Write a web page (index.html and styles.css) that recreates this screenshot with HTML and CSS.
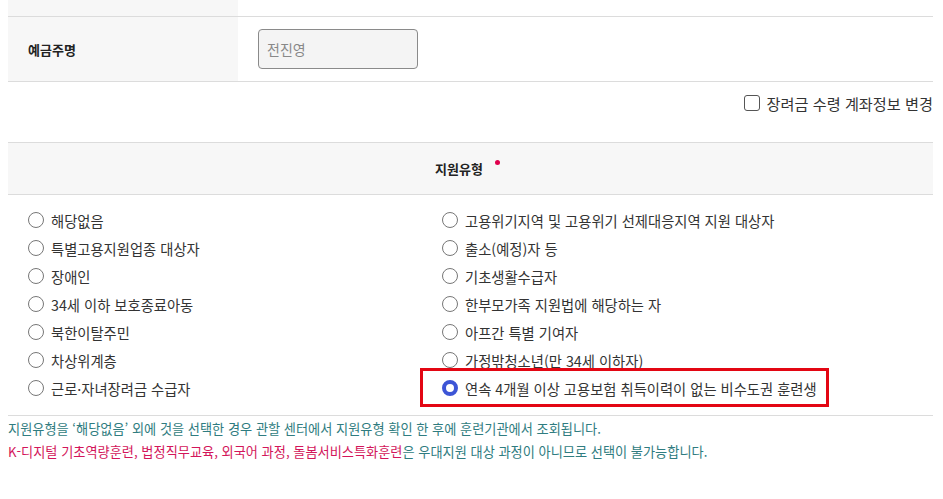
FILE: index.html
```html
<!DOCTYPE html>
<html lang="ko">
<head>
<meta charset="utf-8">
<title>지원유형</title>
<link rel="stylesheet" href="styles.css">
</head>
<body>
<div class="page">
  <div class="prev-row"><div class="th"></div><div class="td"></div></div>
  <div class="form-row">
    <div class="th">예금주명</div>
    <div class="td"><div class="input">전진영</div></div>
  </div>
  <div class="check-row">
    <label class="check"><span class="box"></span><span>장려금 수령 계좌정보 변경</span></label>
  </div>
  <div class="section-head">지원유형<span class="req"></span></div>
  <div class="radio-grid">
    <div class="col">
      <label class="radio"><span class="dot"></span>해당없음</label>
      <label class="radio"><span class="dot"></span>특별고용지원업종 대상자</label>
      <label class="radio"><span class="dot"></span>장애인</label>
      <label class="radio"><span class="dot"></span>34세 이하 보호종료아동</label>
      <label class="radio"><span class="dot"></span>북한이탈주민</label>
      <label class="radio"><span class="dot"></span>차상위계층</label>
      <label class="radio"><span class="dot"></span>근로·자녀장려금 수급자</label>
    </div>
    <div class="col">
      <label class="radio"><span class="dot"></span>고용위기지역 및 고용위기 선제대응지역 지원 대상자</label>
      <label class="radio"><span class="dot"></span>출소(예정)자 등</label>
      <label class="radio"><span class="dot"></span>기초생활수급자</label>
      <label class="radio"><span class="dot"></span>한부모가족 지원법에 해당하는 자</label>
      <label class="radio"><span class="dot"></span>아프간 특별 기여자</label>
      <label class="radio"><span class="dot"></span>가정밖청소년(만 34세 이하자)</label>
      <label class="radio selected"><span class="dot on"></span>연속 4개월 이상 고용보험 취득이력이 없는 비수도권 훈련생</label>
    </div>
  </div>
  <div class="notes">
    <p class="note">지원유형을 ‘해당없음’ 외에 것을 선택한 경우 관할 센터에서 지원유형 확인 한 후에 훈련기관에서 조회됩니다.</p>
    <p class="note"><span class="warn">K-디지털 기초역량훈련, 법정직무교육, 외국어 과정, 돌봄서비스특화훈련</span>은 우대지원 대상 과정이 아니므로 선택이 불가능합니다.</p>
  </div>
</div>
</body>
</html>
```

FILE: styles.css
```css
* { box-sizing: border-box; }
html, body { margin: 0; padding: 0; background: #fff; }
body {
  font-family: "Noto Sans CJK KR", "Noto Sans", sans-serif;
  color: #333;
}
.page {
  width: 925px;
  margin-left: 8px;
}
.prev-row {
  display: flex;
  height: 16px;
}
.prev-row .th { width: 230px; background: #f7f7f7; }
.form-row {
  display: flex;
  height: 66px;
  border-top: 1px solid #dcdcdc;
  border-bottom: 1px solid #dcdcdc;
}
.form-row .th {
  width: 230px;
  background: #f7f7f7;
  padding-left: 20px;
  display: flex;
  align-items: center;
  font-size: 13px;
  font-weight: 700;
  color: #222;
}
.form-row .td {
  padding-left: 20px;
  display: flex;
  align-items: center;
}
.input {
  width: 160px;
  height: 40px;
  border: 1px solid #8a8a8a;
  border-radius: 4px;
  background: #f4f4f4;
  padding-left: 8px;
  display: flex;
  align-items: center;
  font-size: 14px;
  color: #888;
}
.check-row {
  height: 60px;
  display: flex;
  justify-content: flex-end;
  padding-top: 12px;
}
.check {
  display: flex;
  align-items: center;
  gap: 7px;
  height: 17px;
  font-size: 15.2px;
  color: #333;
}
.box {
  width: 16px;
  height: 16px;
  border: 1px solid #555;
  border-radius: 3px;
  background: #fff;
}
.section-head {
  height: 53px;
  border-top: 1px solid #dcdcdc;
  border-bottom: 1px solid #dcdcdc;
  background: #f7f7f7;
  display: flex;
  justify-content: center;
  align-items: center;
  padding-right: 6px;
  font-size: 13px;
  font-weight: 700;
  color: #222;
}
.req {
  width: 5px;
  height: 5px;
  border-radius: 50%;
  background: #e0004d;
  margin-left: 12px;
  margin-bottom: 13px;
}
.radio-grid {
  display: grid;
  grid-template-columns: 414px 1fr;
  padding: 11px 0 13px;
  border-bottom: 1px solid #dcdcdc;
}
.col {
  display: flex;
  flex-direction: column;
  padding-left: 20px;
}
.radio {
  display: flex;
  align-items: center;
  gap: 7px;
  height: 28px;
  font-size: 14.3px;
  color: #333;
  align-self: flex-start;
}
.dot {
  width: 16px;
  height: 16px;
  border: 1px solid #777;
  border-radius: 50%;
  background: #fff;
  flex: none;
}
.dot.on {
  border: 4px solid #3d55d6;
}
.selected { position: relative; }
.selected::after {
  content: "";
  position: absolute;
  left: -22px;
  right: -12px;
  top: -6px;
  bottom: -5px;
  border: 3px solid #e30613;
}
.notes { padding-top: 1px; }
.note {
  margin: 0;
  line-height: 23px;
  font-size: 13.2px;
  color: #2f7c80;
}
.warn { color: #d3155a; }
```
